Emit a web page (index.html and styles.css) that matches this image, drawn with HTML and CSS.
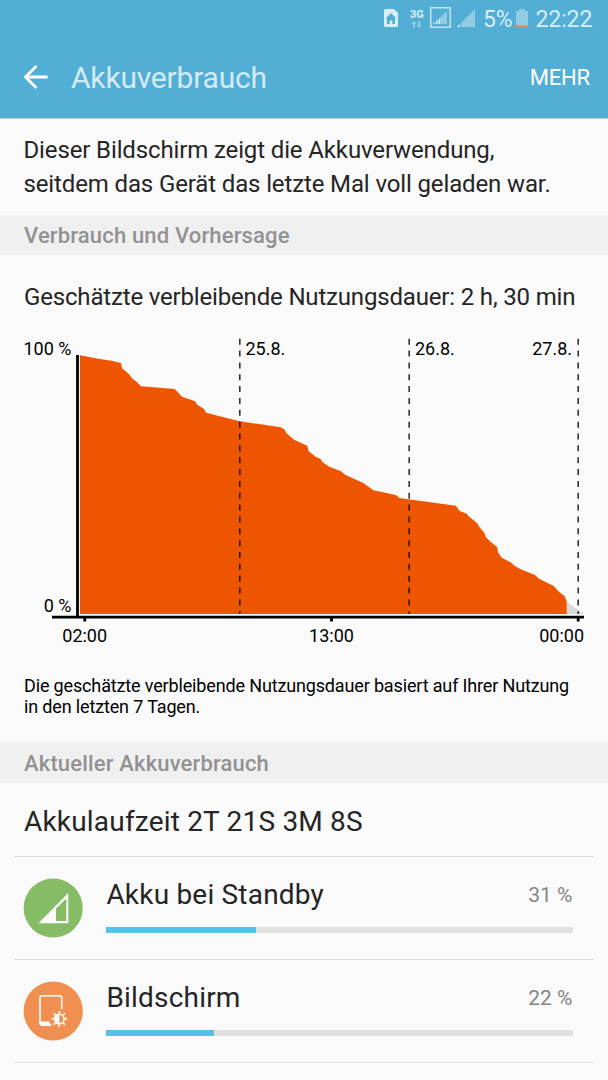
FILE: index.html
```html
<!DOCTYPE html>
<html lang="de">
  <head>
    <meta charset="UTF-8" />
    <meta name="viewport" content="width=device-width, initial-scale=1.0" />
    <title>Akkuverbrauch</title>
    <link rel="stylesheet" href="styles.css">
  </head>
  <body>
    <header class="top">
      <div class="status-bar">
        <svg class="icon-home" width="14" height="18" viewBox="0 0 14 18">
          <path class="light" d="M1.5 0H10l4 4v12.500a1.500 1.500 0 0 1-1.500 1.500h-11A1.500 1.500 0 0 1 0 16.500v-15A1.500 1.500 0 0 1 1.500 0z" />
          <path class="blue" d="M7 4l5.500 5.500H11V15H8.300v-3.500H5.700V15H3V9.500H1.500z" />
        </svg>
        <div class="network">
          <span>3G</span>
          <svg width="11" height="7" viewBox="0 0 11 7">
            <path class="dim" d="M2 7V3H0l3-3 3 3H4v4zM7 0h2v4h2L8 7 5.500 4H7z" />
          </svg>
        </div>
        <svg class="icon-sim" width="21" height="21" viewBox="0 0 21 21">
          <rect class="frame" x="0.750" y="0.750" width="19.500" height="19.500" />
          <path class="dim" d="M17 4v13H10v-6z" />
          <path class="light" d="M3.500 15.500h1.500V17H3.500zM6 14l1.500-1.500V17H6zM8.500 12.500L10 11v6H8.500z" />
        </svg>
        <svg class="icon-signal" width="18" height="18" viewBox="0 0 18 18">
          <path class="dim" d="M18 0v18H4v-4z" />
          <path class="light" d="M0 18l3-3v3z" />
        </svg>
        <span class="percent">5%</span>
        <svg class="icon-battery" width="12" height="18" viewBox="0 0 12 18">
          <path class="dim" d="M3 0h6v2h3v14.500H0V2h3z" />
          <rect class="low" y="16.500" width="12" height="1.500" />
        </svg>
        <span class="clock">22:22</span>
      </div>
      <div class="app-bar">
        <svg class="back" width="24" height="24" viewBox="0 0 24 24">
          <path d="M12.500 1L1.500 12l11 11M1.500 12H23.500" />
        </svg>
        <h1>Akkuverbrauch</h1>
        <span class="more">MEHR</span>
      </div>
    </header>

    <p class="intro">Dieser Bildschirm zeigt die Akkuverwendung,<br />seitdem das Gerät das letzte Mal voll geladen war.</p>

    <h2>Verbrauch und Vorhersage</h2>
    <p class="remaining">Geschätzte verbleibende Nutzungsdauer: 2 h, 30 min</p>

    <svg class="chart" width="608" height="320" viewBox="0 330 608 320">
      <!-- forecast -->
      <path class="forecast" d="M567 602L584 614H567z" />
      <!-- battery level -->
      <path class="level" d="M80 614V355.300L98.300 358.700L111.700 360.700L121 363L122 368.300L128.700 373.700L132 378.300L136 381.300L141 386.300L174.700 389L182 396.700L195 401.300L197.300 404.700L204 409L206 412.700L231.700 419.300L240 421.300L280.700 427.300L284.700 429.700L286.300 433L294 439.700L307.300 445.700L308.700 451.300L316 457L320.700 459L322.300 462L329.300 466.700L341 471.300L345 474.700L363.300 483L373.300 490.300L396 495L399.300 498L456 505.700L459.300 510.700L466.700 513.700L468.700 516.300L477.300 523.300L479.300 527L484.300 532.700L486 537.300L490 541.300L497.300 547.300L498 552.300L501.700 557.700L510.700 562.300L514.700 566L521.700 569.700L535 575L539 578.700L553.300 585.700L559 591.700L564.700 596.300L566.700 602V614z" />
      <!-- days -->
      <path class="day" d="M239.800 338.700V614M409.200 338.700V614M578.200 338.700V614" />
      <!-- axes -->
      <path class="axis" d="M77.500 355V616M52 617.200H584M84.800 617V621.500M331.500 617V621.500M578.200 617V621.500" />
      <text x="71.500" y="355" text-anchor="end">100 %</text>
      <text x="71.500" y="611.500" text-anchor="end">0 %</text>
      <text x="245.500" y="355">25.8.</text>
      <text x="415" y="355">26.8.</text>
      <text x="572" y="355" text-anchor="end">27.8.</text>
      <text x="84.700" y="642" text-anchor="middle">02:00</text>
      <text x="331.500" y="642" text-anchor="middle">13:00</text>
      <text x="584" y="642" text-anchor="end">00:00</text>
    </svg>

    <p class="note">Die geschätzte verbleibende Nutzungsdauer basiert auf Ihrer Nutzung<br />in den letzten 7 Tagen.</p>

    <h2 class="current">Aktueller Akkuverbrauch</h2>
    <p class="runtime">Akkulaufzeit 2T 21S 3M 8S</p>

    <ul class="usage">
      <li>
        <svg class="app-icon" width="60" height="60" viewBox="0 0 60 60">
          <circle class="green" cx="30.200" cy="30" r="29.600" />
          <path class="white" fill-rule="evenodd" d="M45.300 15v30.300H15.500zM43.300 20.500L33 30.500V43H43.300z" />
        </svg>
        <div class="app">
          <div class="app-row">
            <span class="name">Akku bei Standby</span>
            <span class="value">31 %</span>
          </div>
          <div class="bar"><div class="fill" style="width: 32%"></div></div>
        </div>
      </li>
      <li>
        <svg class="app-icon" width="60" height="60" viewBox="0 0 60 60">
          <circle class="orange" cx="30.200" cy="30" r="29.600" />
          <path class="phone" d="M38.700 28V16.500a1.800 1.800 0 0 0-1.800-1.800H18.800a1.800 1.800 0 0 0-1.800 1.800V42.500a1.800 1.800 0 0 0 1.800 1.800H27" />
          <path class="white" d="M17 40.500H25.500L29 45H18.500L17 43.500z" />
          <g class="sun">
            <circle cx="36.300" cy="38" r="4.800" />
            <path d="M36.300 30v2.500M36.300 43.500v2.500M28.300 38h2.500M41.800 38h2.500M30.600 32.300l1.800 1.800M40.200 41.900l1.800 1.800M30.600 43.700l1.800-1.800M40.200 34.100l1.800-1.800" />
          </g>
          <path class="white" d="M36.300 33.200a4.800 4.800 0 0 0 0 9.600z" />
        </svg>
        <div class="app">
          <div class="app-row">
            <span class="name">Bildschirm</span>
            <span class="value">22 %</span>
          </div>
          <div class="bar"><div class="fill" style="width: 23%"></div></div>
        </div>
      </li>
    </ul>
  </body>
</html>
```
FILE: styles.css
```css
* {
  box-sizing: border-box;
}
body {
  margin: 0;
  height: 1080px;
  overflow: hidden;
  background-color: #fafafa;
  color: #252525;
  font-family: Roboto, sans-serif;
}
h1,
h2,
p,
ul {
  margin: 0;
  padding: 0;
}
svg {
  display: block;
  flex: none;
}
.top {
  height: 119px;
  background-color: #52aed5;
  border-bottom: 1px solid #c3cdd2;
}
.status-bar {
  display: flex;
  align-items: flex-start;
  height: 38px;
  padding: 9px 0 0 384px;
  color: #d9eef7;
}
.light {
  fill: #d9eef7;
}
.dim {
  fill: #91cbe4;
}
.blue {
  fill: #52aed5;
}
.low {
  fill: #d99070;
}
.network {
  width: 14px;
  margin-left: 12px;
  font-size: 11px;
  font-weight: bold;
  line-height: 11px;
}
.network svg {
  margin: 1px 0 0 1px;
}
.icon-sim {
  margin: -2px 0 0 6px;
}
.frame {
  fill: none;
  stroke: #c5e4f1;
  stroke-width: 1.5;
}
.icon-signal {
  margin-left: 6px;
}
.percent,
.clock {
  font-size: 23px;
  line-height: 21px;
}
.percent {
  width: 29px;
  margin-left: 8px;
  letter-spacing: -0.3px;
}
.icon-battery {
  margin-left: 4px;
}
.clock {
  margin-left: 7.5px;
  letter-spacing: -0.1px;
}
.app-bar {
  display: flex;
  align-items: center;
  height: 78px;
  padding: 0 18px 0 24px;
}
.back path {
  fill: none;
  stroke: #fff;
  stroke-width: 2.8;
}
h1 {
  flex: 1;
  margin-left: 23px;
  color: #d4ebf6;
  font-size: 30px;
  font-weight: 400;
  letter-spacing: -0.2px;
}
.more {
  color: #fff;
  font-size: 22px;
  letter-spacing: -0.15px;
}
.intro {
  height: 96px;
  padding: 14px 23.5px 0;
  font-size: 24px;
  line-height: 34px;
  letter-spacing: -0.13px;
  white-space: nowrap;
}
h2 {
  height: 40px;
  padding-left: 24px;
  background-color: #f0f0f0;
  color: #929292;
  font-size: 22px;
  font-weight: 500;
  line-height: 42px;
  letter-spacing: 0.16px;
}
.current {
  height: 41px;
  line-height: 43px;
}
.remaining {
  height: 75px;
  padding: 26px 0 0 24px;
  font-size: 24px;
  line-height: 32px;
  letter-spacing: -0.17px;
  white-space: nowrap;
}
.chart text {
  fill: #000;
  font-size: 18px;
}
.level {
  fill: #ee5500;
}
.forecast {
  fill: #d9d9d9;
}
.day {
  fill: none;
  stroke: #000;
  stroke-opacity: 0.8;
  stroke-width: 1.6;
  stroke-dasharray: 6 5.85;
}
.axis {
  fill: none;
  stroke: #000;
  stroke-width: 2.8;
}
.note {
  height: 92px;
  padding: 25px 0 0 24px;
  color: #000;
  font-size: 18px;
  line-height: 21px;
  letter-spacing: -0.15px;
  white-space: nowrap;
}
.runtime {
  height: 74px;
  margin: 0 15px;
  padding-left: 9px;
  border-bottom: 1px solid #dcdcdc;
  font-size: 28px;
  line-height: 77px;
  letter-spacing: 0.19px;
}
.usage {
  list-style: none;
}
.usage li {
  display: flex;
  height: 103px;
  margin: 0 15px;
  padding: 21px 20.5px 0 8px;
  border-bottom: 1px solid #dcdcdc;
}
.green {
  fill: #86bc66;
}
.orange {
  fill: #f09050;
}
.white {
  fill: #fff;
}
.phone,
.sun {
  fill: none;
  stroke: #fff;
  stroke-width: 1.6;
}
.app {
  flex: 1;
  margin-left: 23.4px;
}
.app-row {
  display: flex;
  justify-content: space-between;
  height: 49px;
  line-height: 34px;
}
.name {
  font-size: 28px;
  letter-spacing: 0.2px;
}
.value {
  color: #858585;
  font-size: 21px;
}
.bar {
  height: 5.5px;
  background-color: #e0e0e0;
}
.fill {
  height: 5.5px;
  background-color: #58bfe6;
}
```
